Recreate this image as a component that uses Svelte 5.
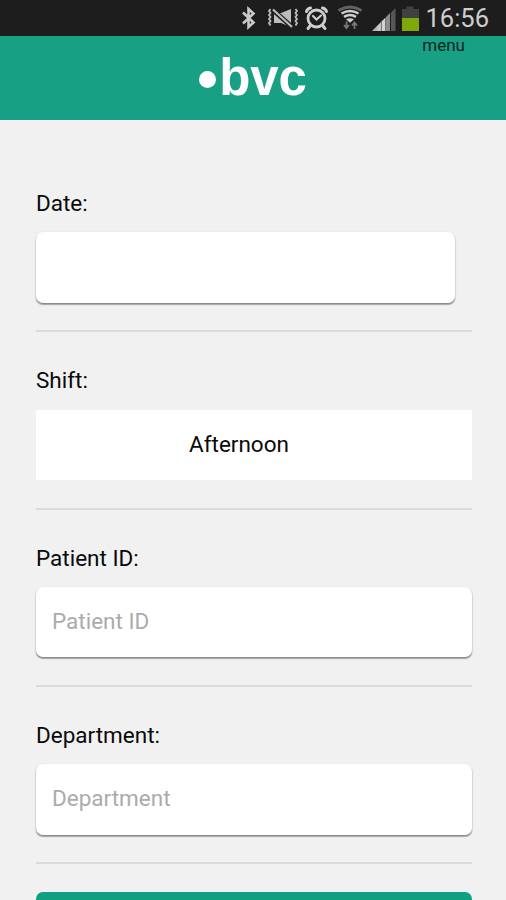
<script lang="ts">
    interface Field {
        id: string;
        label: string;
        type: "date" | "select" | "text";
    }

    const fields: Field[] = [
        { id: "date", label: "Date", type: "date" },
        { id: "shift", label: "Shift", type: "select" },
        { id: "patient", label: "Patient ID", type: "text" },
        { id: "department", label: "Department", type: "text" },
    ];

    const time = "16:56";
    let shift = "Afternoon";
    let values: Record<string, string> = {
        date: "",
        patient: "",
        department: "",
    };
</script>

<div class="screen">
    <div class="status">
        <svg class="status__icons" viewBox="0 0 186 36" aria-hidden="true">
            <!-- bluetooth -->
            <path
                d="M3 12.500L13.500 22.500L8.500 27V9L13.500 13.500L3 23.500"
                fill="none"
                stroke="#c9c9c9"
                stroke-width="2.600"
            />
            <!-- vibrate / muted -->
            <g fill="none" stroke="#bdbdbd">
                <path
                    d="M30.500 9l-1.500 2 1.500 2-1.500 2 1.500 2-1.500 2 1.500 2-1.500 2 1.500 2.500M55.500 9l1.500 2-1.500 2 1.500 2-1.500 2 1.500 2-1.500 2 1.500 2-1.500 2.500"
                    stroke-width="1.800"
                />
                <path
                    d="M34 13h7l10-4v18l-10-4h-7z"
                    fill="#bdbdbd"
                    stroke="none"
                />
                <path d="M33 10L52 27" stroke="#1d1d1d" stroke-width="4.800" />
                <path d="M33 9.500L52 27" stroke-width="2.200" />
            </g>
            <!-- alarm -->
            <g fill="none" stroke="#cecece" stroke-linecap="round">
                <circle cx="76.500" cy="18.500" r="8.500" stroke-width="2.800" />
                <path
                    d="M66.500 11.500q1-3 4-3.500M86.500 11.500q-1-3-4-3.500M70 26l-2 2.500M83 26l2 2.500"
                    stroke-width="3"
                />
                <path d="M73 16l3.500 3.500 4.500-4" stroke-width="2.200" />
            </g>
            <!-- wifi with traffic arrows -->
            <g fill="none">
                <path
                    d="M98.500 10.500q11.500-7 23 0"
                    stroke="#626262"
                    stroke-width="3"
                />
                <path
                    d="M101.500 13.500q8.500-5 17 0"
                    stroke="#cfcfcf"
                    stroke-width="2.600"
                />
                <path
                    d="M104 16.800q6-3.500 12 0"
                    stroke="#cfcfcf"
                    stroke-width="2.600"
                />
                <path d="M106 19.200q4-2 8 0l-4 3.500z" fill="#cfcfcf" />
                <path
                    d="M106.500 21.500v7M104 25l2.500 3 2.500-3M114.500 29v-7M112 25.500l2.500-3 2.500 3"
                    stroke="#777"
                    stroke-width="1.800"
                />
            </g>
            <!-- signal -->
            <path d="M132 31l5-5v5z" fill="#b5b5b5" />
            <path d="M137 26l4-4v9h-4z" fill="#c6c6c6" />
            <path d="M141.500 21.500l4-4v13.500h-4z" fill="#d2d2d2" />
            <path d="M146 17l4-4v18h-4z" fill="#8c8c8c" />
            <path d="M151 12.500l4.500-4.500v23h-4.500z" fill="#575757" />
            <!-- battery -->
            <path d="M162 9h4.500V6.500h7V9h5.500v9h-17z" fill="#414141" />
            <path d="M162 18h17v13h-17z" fill="#7fa90b" />
        </svg>
        <span class="status__time">{time}</span>
    </div>

    <header class="header">
        <div class="logo"><span class="logo__dot"></span>bvc</div>
        <a class="menu" href="#menu">menu</a>
    </header>

    <form class="form">
        {#each fields as field}
            <div class="field">
                <label for={field.id}>{field.label}:</label>
                {#if field.type === "select"}
                    <button class="select" id={field.id} type="button">
                        {shift}
                    </button>
                {:else if field.type === "date"}
                    <input
                        class="input input--date"
                        id={field.id}
                        type="text"
                        bind:value={values[field.id]}
                    />
                {:else}
                    <input
                        class="input"
                        id={field.id}
                        type="text"
                        placeholder={field.label}
                        bind:value={values[field.id]}
                    />
                {/if}
            </div>
        {/each}
        <button class="submit" type="button" aria-label="Submit"></button>
    </form>
</div>

<style>
    :global(body) {
        margin: 0;
        background: #f1f1f1;
    }
    .screen {
        height: 900px;
        overflow: hidden;
        background: #f1f1f1;
        color: #0a0a0a;
        font-family: Roboto, sans-serif;
        font-size: 22.5px;
    }
    .status {
        display: flex;
        align-items: center;
        justify-content: flex-end;
        height: 36px;
        padding-right: 17px;
        box-sizing: border-box;
        background: #1d1d1d;
    }
    .status__icons {
        width: 186px;
        height: 36px;
        margin-right: -1px;
    }
    .status__time {
        color: #cecece;
        font-size: 25.5px;
        line-height: 36px;
    }
    .header {
        position: relative;
        display: flex;
        justify-content: center;
        height: 84px;
        background: #18a085;
    }
    .logo {
        display: flex;
        align-items: center;
        height: 83px;
        color: #fff;
        font-family: "Liberation Sans", Arial, sans-serif;
        font-size: 51px;
        font-weight: bold;
        letter-spacing: -0.2px;
    }
    .logo__dot {
        width: 17px;
        height: 17px;
        margin: 3px 3px 0 0;
        border-radius: 50%;
        background: #fff;
    }
    .menu {
        position: absolute;
        top: -1px;
        right: 41px;
        color: #08251f;
        font-size: 17px;
        line-height: 20px;
        text-decoration: none;
    }
    .form {
        padding: 35px 34px 0 36px;
    }
    .field {
        box-sizing: border-box;
        height: 177.3px;
        padding-top: 34px;
        border-bottom: 2px solid #dadada;
    }
    .field label {
        display: block;
        margin-bottom: 15px;
        line-height: 29px;
    }
    .input,
    .select {
        display: block;
        box-sizing: border-box;
        width: 100%;
        height: 70px;
        border: 0;
        background: #fff;
        color: #0a0a0a;
        font: inherit;
    }
    .input {
        height: 70.5px;
        margin-top: -0.7px;
        padding: 0 16px 2px;
        border-radius: 7px;
        outline: none;
        box-shadow:
            0 1px 2px rgba(0, 0, 0, 0.3),
            0 1.5px 1px rgba(0, 0, 0, 0.25);
    }
    .input--date {
        width: 419px;
    }
    .input::placeholder {
        color: #ababab;
        opacity: 1;
    }
    .select {
        padding: 0 30px 2px 0;
        text-align: center;
    }
    .submit {
        display: block;
        width: 100%;
        height: 70px;
        margin-top: 28px;
        border: 0;
        border-radius: 7px;
        background: #10a080;
    }
</style>
